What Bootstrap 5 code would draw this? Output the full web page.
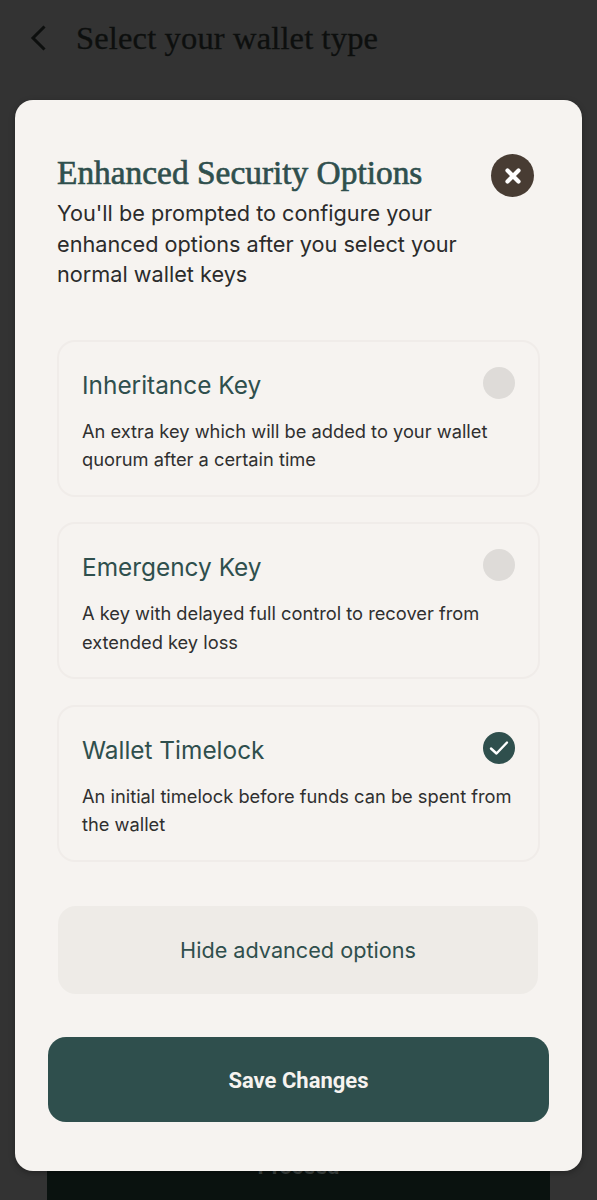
<!DOCTYPE html>
<html lang="en">
<head>
<meta charset="utf-8">
<title>Enhanced Security Options</title>
<link href="https://cdn.jsdelivr.net/npm/bootstrap@5.3.0/dist/css/bootstrap.min.css" rel="stylesheet">
<style>
html,body{height:1200px;overflow:hidden}
body{background:#333333;font-family:Inter,"Liberation Sans",sans-serif;position:relative}
.screen-head{height:76px;padding:0 0 0 30px;gap:29px}
.screen-title{font-family:"Liberation Serif",serif;font-size:32.5px;letter-spacing:.15px;color:#0d0f0e;margin:0;font-weight:400;-webkit-text-stroke:.3px #0d0f0e}
.behind-btn{position:absolute;left:47px;width:503px;top:1130px;height:70px;background:#0a120f;border-radius:8px 8px 0 0;color:#3c4240;font:700 22px Roboto,sans-serif;padding-top:24px}
.sheet{position:absolute;left:15px;top:100px;width:567px;height:1071px;background:#f6f3f0;border-radius:18px;padding:54px 42px 0 42px;box-shadow:0 2px 6px rgba(0,0,0,.3)}
.sheet-title{font-family:"Liberation Serif",serif;font-weight:400;font-size:33.4px;line-height:38px;color:#2f4f4d;margin:0;-webkit-text-stroke:.65px #2f4f4d}
.close-dot{width:43px;height:43px;border-radius:50%;background:#483c33;margin:0 6px 0 0;border:0;padding:0;flex:none}
.sheet-sub{font-size:21.68px;line-height:30.7px;color:#2b2b2b;font-weight:400;margin:1px 0 49.500px;width:430px}
.opt{width:483px;height:157px;background:#f6f3f0;border:2px solid #f0ece9;border-radius:18px;padding:23px 23px 0 23px;margin-bottom:25.5px}
.opt-name{font-size:24.4px;line-height:40px;color:#2f4f4d;font-weight:400;margin:0}
.opt-desc{font-size:18.27px;line-height:28.5px;color:#2f2f2f;margin:12px 0 0;font-weight:400}
.tick{width:32px;height:32px;border-radius:50%;background:#dedbd8;flex:none;margin:2px 0 0}
.tick-on{background:#2f4f4d}
.hide-btn{width:480px;height:88px;margin:44px 0 0 1px;background:#eeebe7;border:0;border-radius:18px;color:#2f4f4d;font-size:21.65px;font-weight:400;display:block;padding:2px 0 0}
.hide-btn:hover{background:#eeebe7;color:#2f4f4d}
.save-btn{width:501px;height:85px;margin:43px 0 0 -9px;background:#2f4f4d;border:0;border-radius:18px;color:#f6f3f0;font:700 22px Roboto,sans-serif;display:block;padding:3px 0 0}
.save-btn:hover{background:#2f4f4d;color:#f6f3f0}
</style>
</head>
<body>
<div class="screen-head d-flex align-items-center">
<svg width="17" height="28" viewBox="0 0 17 28" fill="none" aria-hidden="true"><path d="M14.5 2.5 3 14l11.500 11.500" stroke="#0d0f0e" stroke-width="3"/></svg>
<h1 class="screen-title">Select your wallet type</h1>
</div>
<div class="behind-btn text-center">Proceed</div>
<div class="sheet">
<div class="d-flex justify-content-between align-items-start">
<h2 class="sheet-title">Enhanced Security Options</h2>
<button class="close-dot d-flex align-items-center justify-content-center" aria-label="Close"><svg width="18" height="18" viewBox="0 0 18 18" aria-hidden="true"><path d="M3.500 3.500 14.500 14.500M14.500 3.500 3.500 14.500" stroke="#fff" stroke-width="4.200" stroke-linecap="round"/></svg></button>
</div>
<p class="sheet-sub">You'll be prompted to configure your enhanced options after you select your normal wallet keys</p>
<div class="opt">
<div class="d-flex justify-content-between align-items-start"><h3 class="opt-name">Inheritance Key</h3><span class="tick"></span></div>
<p class="opt-desc">An extra key which will be added to your wallet quorum after a certain time</p>
</div>
<div class="opt">
<div class="d-flex justify-content-between align-items-start"><h3 class="opt-name">Emergency Key</h3><span class="tick"></span></div>
<p class="opt-desc">A key with delayed full control to recover from extended key loss</p>
</div>
<div class="opt">
<div class="d-flex justify-content-between align-items-start"><h3 class="opt-name">Wallet Timelock</h3><span class="tick tick-on d-flex align-items-center justify-content-center"><svg width="20" height="16" viewBox="0 0 20 16" aria-hidden="true"><path d="M2 8.500 7.500 13.500 18 2.500" fill="none" stroke="#fff" stroke-width="2.400" stroke-linecap="round" stroke-linejoin="round"/></svg></span></div>
<p class="opt-desc">An initial timelock before funds can be spent from the wallet</p>
</div>
<button class="btn hide-btn">Hide advanced options</button>
<button class="btn save-btn">Save Changes</button>
</div>
</body>
</html>
